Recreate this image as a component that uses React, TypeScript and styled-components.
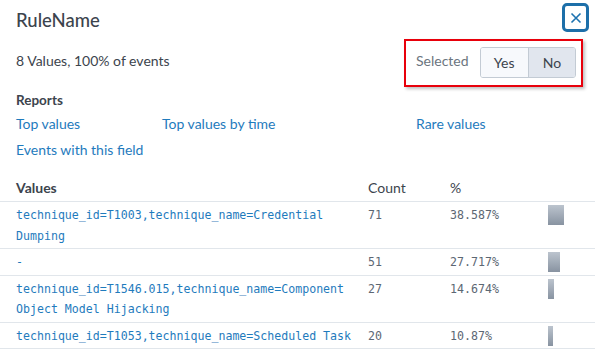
import React from 'react';
import styled, { createGlobalStyle } from 'styled-components';

const GlobalStyle = createGlobalStyle`
  body {
    margin: 0;
    background: #fff;
    font-family: Lato, "Open Sans", sans-serif;
    color: #3c444d;
  }
`;

const Panel = styled.div`
  width: 595px;
  height: 351px;
  overflow: hidden;
`;

const Header = styled.div`
  display: flex;
  justify-content: space-between;
  align-items: flex-start;
  height: 36px;
  padding: 0 6px 0 16px;
`;

const Title = styled.h2`
  margin: 0;
  padding-top: 8px;
  font-size: 18.5px;
  line-height: 24px;
  font-weight: 500;
`;

const CloseButton = styled.button`
  margin-top: 3px;
  width: 27px;
  height: 29px;
  border: 3px solid #1d6fa9;
  border-radius: 5px;
  background: #fff;
  display: flex;
  align-items: center;
  justify-content: center;
  padding: 0;
  color: #1d72b0;
`;

const Summary = styled.div`
  display: flex;
  justify-content: space-between;
  align-items: center;
  padding: 3px 12px 0 16px;
  font-size: 14px;
`;

const SummaryText = styled.span`
  margin-top: -5px;
`;

const Highlight = styled.div`
  display: flex;
  align-items: center;
  gap: 11px;
  width: 179px;
  height: 48px;
  box-sizing: border-box;
  border: 2px solid #e8000b;
  padding: 0 5px 1px 10px;
  box-shadow: 2px 2px 3px rgba(0, 0, 0, 0.25);
`;

const Label = styled.span`
  font-size: 14px;
  color: #6b7580;
  margin-top: -4px;
`;

const Toggle = styled.div`
  display: flex;
  border: 1px solid #c3cbd4;
  border-radius: 3px;
  overflow: hidden;
  height: 31px;
  box-sizing: border-box;
`;

const ToggleOption = styled.div<{ $active?: boolean }>`
  display: flex;
  align-items: center;
  justify-content: center;
  width: ${(p) => (p.$active ? '48px' : '49px')};
  background: ${(p) => (p.$active ? '#e1e6ee' : '#f7f9fc')};
  border-left: ${(p) => (p.$active ? '1px solid #c3cbd4' : 'none')};
  font-size: 14px;
  color: #3c444d;
`;

const Reports = styled.div`
  padding: 3px 16px 0;
`;

const SectionLabel = styled.div`
  font-size: 13.5px;
  font-weight: 700;
  line-height: 20px;
`;

const LinkGrid = styled.div`
  display: grid;
  grid-template-columns: 146px 254px auto;
  grid-auto-rows: 26px;
  align-items: center;
`;

const ReportLink = styled.a`
  color: #1f7bbd;
  font-size: 14px;
  text-decoration: none;
`;

const Table = styled.table`
  margin-top: 12px;
  width: 100%;
  border-collapse: collapse;
  table-layout: fixed;
`;

const Th = styled.th<{ $bold?: boolean }>`
  text-align: left;
  font-size: 14px;
  font-weight: ${(p) => (p.$bold ? 700 : 400)};
  line-height: 21px;
  padding: 3px 0;
  border-bottom: 1px solid #e1e6eb;
  &:first-child {
    padding-left: 16px;
  }
`;

const Td = styled.td`
  vertical-align: top;
  padding: 3px 0 2px;
  line-height: 20.5px;
  border-bottom: 1px solid #e1e6eb;
  font-family: "DejaVu Sans Mono", "Liberation Mono", monospace;
  font-size: 11.6px;
  color: #5c6773;
`;

const ValueCell = styled(Td)`
  padding-left: 16px;
  padding-right: 12px;
  color: #1f7bbd;
`;

const Bar = styled.div`
  height: 20px;
  background: linear-gradient(#bcc4ce, #8893a1);
`;

const rows = [
  { value: 'technique_id=T1003,technique_name=Credential Dumping', count: 71, pct: '38.587%' },
  { value: '-', count: 51, pct: '27.717%' },
  { value: 'technique_id=T1546.015,technique_name=Component Object Model Hijacking', count: 27, pct: '14.674%' },
  { value: 'technique_id=T1053,technique_name=Scheduled Task', count: 20, pct: '10.87%' },
];

const App: React.FC = () => {
  return (
    <Panel>
      <GlobalStyle />
      <Header>
        <Title>RuleName</Title>
        <CloseButton aria-label="close">
          <svg width="12" height="12" viewBox="0 0 12 12">
            <path d="M1.5 1.5 L10.5 10.5 M10.5 1.5 L1.5 10.5" stroke="currentColor" strokeWidth="1.6" fill="none" />
          </svg>
        </CloseButton>
      </Header>
      <Summary>
        <SummaryText>8 Values, 100% of events</SummaryText>
        <Highlight>
          <Label>Selected</Label>
          <Toggle>
            <ToggleOption>Yes</ToggleOption>
            <ToggleOption $active>No</ToggleOption>
          </Toggle>
        </Highlight>
      </Summary>
      <Reports>
        <SectionLabel>Reports</SectionLabel>
        <LinkGrid>
          <ReportLink href="#">Top values</ReportLink>
          <ReportLink href="#">Top values by time</ReportLink>
          <ReportLink href="#">Rare values</ReportLink>
          <ReportLink href="#">Events with this field</ReportLink>
        </LinkGrid>
      </Reports>
      <Table>
        <colgroup>
          <col style={{ width: 368 }} />
          <col style={{ width: 82 }} />
          <col style={{ width: 98 }} />
          <col />
        </colgroup>
        <thead>
          <tr>
            <Th $bold>Values</Th>
            <Th>Count</Th>
            <Th>%</Th>
            <Th />
          </tr>
        </thead>
        <tbody>
          {rows.map((r) => (
            <tr key={r.value}>
              <ValueCell>{r.value}</ValueCell>
              <Td>{r.count}</Td>
              <Td>{r.pct}</Td>
              <Td>
                <Bar style={{ width: parseFloat(r.pct) * 0.42 }} />
              </Td>
            </tr>
          ))}
        </tbody>
      </Table>
    </Panel>
  );
};

export default App;
